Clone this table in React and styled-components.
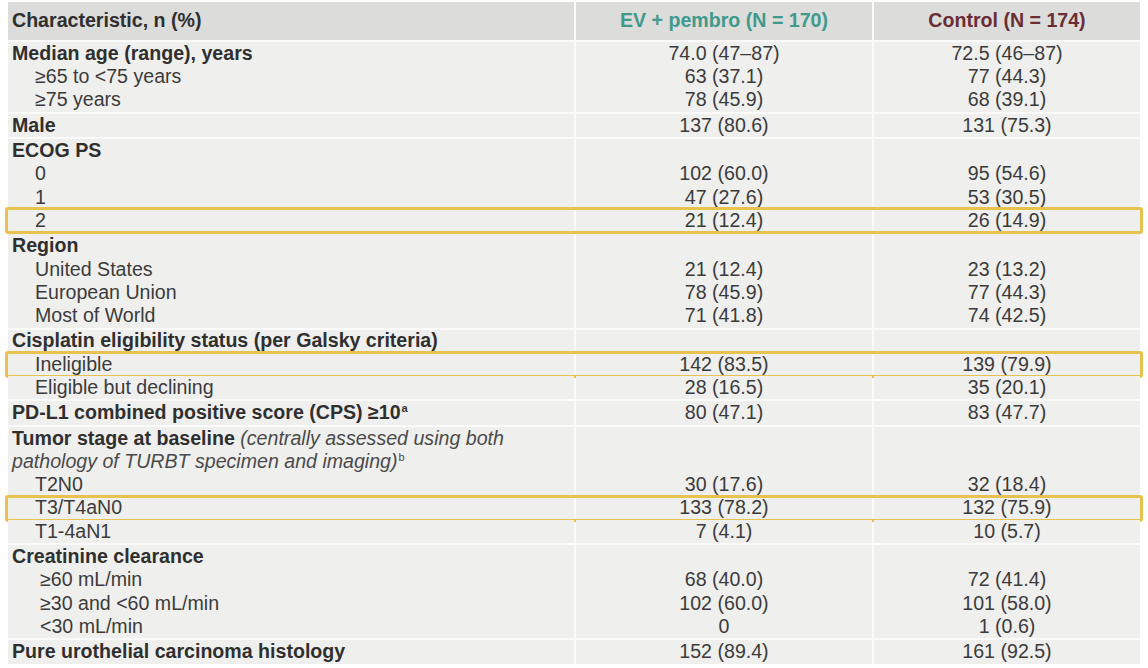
import React from "react";
import styled, { createGlobalStyle, css } from "styled-components";

const GlobalStyle = createGlobalStyle`
  html, body {
    margin: 0;
    padding: 0;
    background: #ffffff;
  }
  body {
    font-family: "Liberation Sans", Arial, sans-serif;
    color: #363636;
  }
`;

const Table = styled.div`
  width: 1132px;
  margin: 2px 0 0 8px;
  display: flex;
  flex-direction: column;
  gap: 2px;
  background: #fbfbfb;
  font-size: 19.6px;
`;

const Group = styled.div`
  display: flex;
  flex-direction: column;
`;

const Line = styled.div`
  position: relative;
  display: grid;
  grid-template-columns: 566px 296px 266px;
  column-gap: 2px;
  height: ${(p) => (p.$head ? "38px" : "23.3px")};

  ${(p) =>
    p.$highlight &&
    css`
      &::after {
        content: "";
        position: absolute;
        top: -2px;
        bottom: -2px;
        left: -3px;
        right: -3px;
        border: 3px solid #e8c24e;
        border-radius: 3px;
        pointer-events: none;
      }
    `}
`;

const Cell = styled.div`
  background: ${(p) => (p.$head ? "#dcdcdb" : "#efefee")};
  display: flex;
  align-items: center;
  white-space: nowrap;
  line-height: 1;
  justify-content: ${(p) => (p.$center ? "center" : "flex-start")};
  padding-left: ${(p) => (p.$center ? 0 : p.$indent || 4)}px;
  font-weight: ${(p) => (p.$bold ? 700 : 400)};
  color: ${(p) => p.$color || (p.$bold ? "#2f2f2f" : "#3b3b3b")};
`;

const Text = styled.span`
  display: block;
`;

const Note = styled.span`
  font-style: italic;
  font-weight: 400;
  color: #4a4a4a;
`;

const Sup = styled.sup`
  font-size: 11px;
  font-style: normal;
  font-weight: ${(p) => (p.$bold ? 700 : 400)};
  line-height: 0;
  vertical-align: 7px;
  margin-left: 1px;
`;

const groups = [
  {
    label: "Median age (range), years",
    ev: "74.0 (47–87)",
    ctl: "72.5 (46–87)",
    subs: [
      ["≥65 to <75 years", "63 (37.1)", "77 (44.3)"],
      ["≥75 years", "78 (45.9)", "68 (39.1)"],
    ],
  },
  { label: "Male", ev: "137 (80.6)", ctl: "131 (75.3)" },
  {
    label: "ECOG PS",
    subs: [
      ["0", "102 (60.0)", "95 (54.6)"],
      ["1", "47 (27.6)", "53 (30.5)"],
      ["2", "21 (12.4)", "26 (14.9)", true],
    ],
  },
  {
    label: "Region",
    subs: [
      ["United States", "21 (12.4)", "23 (13.2)"],
      ["European Union", "78 (45.9)", "77 (44.3)"],
      ["Most of World", "71 (41.8)", "74 (42.5)"],
    ],
  },
  {
    label: "Cisplatin eligibility status (per Galsky criteria)",
    subs: [
      ["Ineligible", "142 (83.5)", "139 (79.9)", true],
      ["Eligible but declining", "28 (16.5)", "35 (20.1)"],
    ],
  },
  {
    label: (
      <>
        PD-L1 combined positive score (CPS) ≥10<Sup $bold>a</Sup>
      </>
    ),
    ev: "80 (47.1)",
    ctl: "83 (47.7)",
  },
  {
    label: (
      <>
        Tumor stage at baseline <Note>(centrally assessed using both</Note>
      </>
    ),
    extra: (
      <Note>
        pathology of TURBT specimen and imaging)<Sup>b</Sup>
      </Note>
    ),
    subs: [
      ["T2N0", "30 (17.6)", "32 (18.4)"],
      ["T3/T4aN0", "133 (78.2)", "132 (75.9)", true],
      ["T1-4aN1", "7 (4.1)", "10 (5.7)"],
    ],
  },
  {
    label: "Creatinine clearance",
    indent: 32,
    subs: [
      ["≥60 mL/min", "68 (40.0)", "72 (41.4)"],
      ["≥30 and <60 mL/min", "102 (60.0)", "101 (58.0)"],
      ["<30 mL/min", "0", "1 (0.6)"],
    ],
  },
  { label: "Pure urothelial carcinoma histology", ev: "152 (89.4)", ctl: "161 (92.5)" },
];

export default function App() {
  return (
    <>
      <GlobalStyle />
      <Table>
        <Line $head>
          <Cell $head $bold>
            Characteristic, n (%)
          </Cell>
          <Cell $head $bold $center $color="#3f9a8c">
            EV + pembro (N = 170)
          </Cell>
          <Cell $head $bold $center $color="#6a2d35">
            Control (N = 174)
          </Cell>
        </Line>
        {groups.map((g, i) => (
          <Group key={i}>
            <Line>
              <Cell $bold>
                <Text>{g.label}</Text>
              </Cell>
              <Cell $center>{g.ev}</Cell>
              <Cell $center>{g.ctl}</Cell>
            </Line>
            {g.extra && (
              <Line>
                <Cell>
                  <Text>{g.extra}</Text>
                </Cell>
                <Cell />
                <Cell />
              </Line>
            )}
            {(g.subs || []).map(([name, ev, ctl, hl]) => (
              <Line key={name} $highlight={hl}>
                <Cell $indent={g.indent || 27}>{name}</Cell>
                <Cell $center>{ev}</Cell>
                <Cell $center>{ctl}</Cell>
              </Line>
            ))}
          </Group>
        ))}
      </Table>
    </>
  );
}
